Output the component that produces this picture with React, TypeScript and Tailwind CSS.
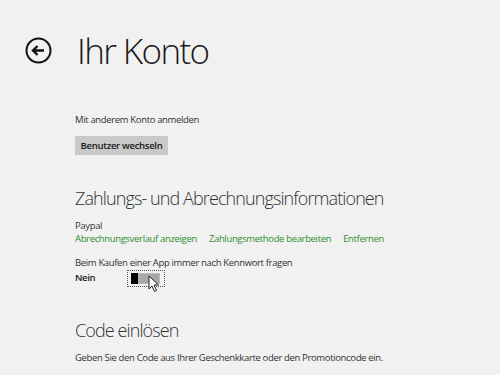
import React from 'react';

function BackButton() {
  return (
    <svg width="27" height="27" viewBox="0 0 27 27" fill="none">
      <circle cx="13.5" cy="13.5" r="12" stroke="#111" strokeWidth="2" />
      <path d="M19 13.5H8.5M12.5 9l-4.5 4.5 4.5 4.5" stroke="#111" strokeWidth="2.4" strokeLinecap="butt" strokeLinejoin="miter" />
    </svg>
  );
}

function Cursor() {
  return (
    <svg width="12" height="18" viewBox="0 0 12 18" className="absolute left-[20px] top-[4px]">
      <path d="M1 1v13l3-3 2.5 5.5 2-1L6 10h4.5z" fill="#fff" stroke="#222" strokeWidth="1" strokeLinejoin="round" />
    </svg>
  );
}

function App() {
  const font = { fontFamily: '"Open Sans", "Noto Sans", sans-serif' };
  return (
    <div className="min-h-screen w-[500px] h-[375px] overflow-hidden bg-[#f1f1f1] text-[#222]" style={font}>
      <div className="flex items-center pl-[25px] pt-[20px] h-[80px]">
        <BackButton />
        <h1 className="ml-[25px] text-[35px] font-light leading-none tracking-[-1.6px] text-[#1a1a1a]">Ihr Konto</h1>
      </div>

      <div className="pl-[75px] text-[9.5px] tracking-[-0.35px]">
        <p className="mt-[33px] leading-[14px] text-[#333]">Mit anderem Konto anmelden</p>
        <button className="mt-[9px] h-[19px] w-[93px] bg-[#c9c9c9] text-[9.5px] tracking-[-0.3px] font-semibold text-[#1a1a1a] leading-none">
          Benutzer wechseln
        </button>

        <h2 className="mt-[31px] text-[18px] font-light leading-[24px] tracking-[-0.9px] text-[#333]">Zahlungs- und Abrechnungsinformationen</h2>
        <p className="mt-[9px] leading-[13px] text-[#333]">Paypal</p>
        <div className="flex gap-[12px] leading-[13px] text-[#2d8f2d]">
          <span>Abrechnungsverlauf anzeigen</span>
          <span>Zahlungsmethode bearbeiten</span>
          <span>Entfernen</span>
        </div>

        <p className="mt-[11px] leading-[13px] text-[#333]">Beim Kaufen einer App immer nach Kennwort fragen</p>
        <div className="flex items-center h-[18px]">
          <span className="w-[52px] font-semibold text-[#1a1a1a]">Nein</span>
          <div className="relative w-[38px] h-[17px] border border-dotted border-[#555] flex items-center px-[3px]">
            <div className="w-[7px] h-[11px] bg-black" />
            <div className="w-[22px] h-[11px] bg-[#a8a8a8] border border-[#bbb]" />
            <Cursor />
          </div>
        </div>

        <h2 className="mt-[31px] text-[18px] font-light leading-[24px] tracking-[-0.9px] text-[#333]">Code einlösen</h2>
        <p className="mt-[9px] leading-[13px] text-[#333]">Geben Sie den Code aus Ihrer Geschenkkarte oder den Promotioncode ein.</p>
      </div>
    </div>
  );
}

export default App;
